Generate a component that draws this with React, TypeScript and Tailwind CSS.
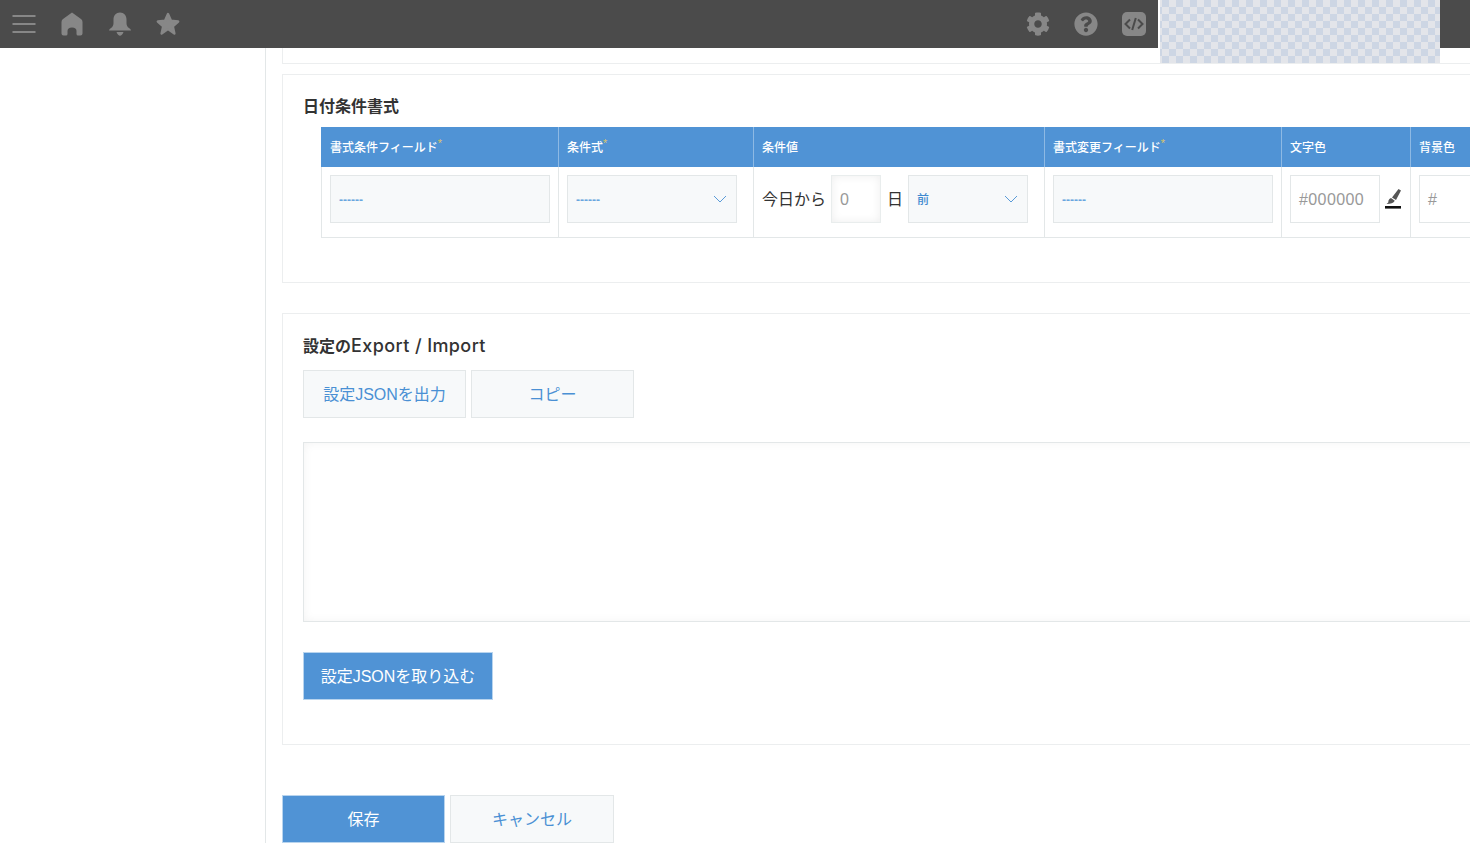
import React from "react";
import { FaCog, FaQuestionCircle } from "react-icons/fa";

const font = { fontFamily: '"Liberation Sans", "Noto Sans CJK JP", sans-serif' };

function Chevron() {
  return (
    <svg width="14" height="8" viewBox="0 0 14 8" className="shrink-0">
      <path d="M1 1l6 6 6-6" fill="none" stroke="#5a9bd8" strokeWidth="1" />
    </svg>
  );
}

function Th({ children, req, w }: { children: React.ReactNode; req?: boolean; w: string }) {
  return (
    <th className={`${w} h-10 border-r border-[#8db9e4] px-2 pt-[2px] text-left align-middle text-[12px] font-medium text-white first:border-l first:border-l-[#5093d5] last:border-r-0`}>
      <span className="relative">
        {children}
        {req && <span className="absolute -top-[3px] left-full text-[11px] leading-none text-[#d9c36a]">*</span>}
      </span>
    </th>
  );
}

function Field({ w, label, arrow }: { w: string; label: string; arrow?: boolean }) {
  return (
    <div className={`${w} flex h-12 items-center justify-between border border-[#e3e7e8] bg-[#f7f9fa] pl-2 pr-[9px] text-[12px] text-[#3f8ad0]`}>
      <span className="mt-[2px] font-medium">{label}</span>
      {arrow && <Chevron />}
    </div>
  );
}

function Dashes({ w, arrow }: { w: string; arrow?: boolean }) {
  return (
    <div className={`${w} flex h-12 items-center justify-between border border-[#e3e7e8] bg-[#f7f9fa] pl-2 pr-[9px] text-[12px] font-bold text-[#6aa6de]`}>
      <span className="mt-[2px]">------</span>
      {arrow && <Chevron />}
    </div>
  );
}

function Btn({ children, primary, w }: { children: React.ReactNode; primary?: boolean; w: string }) {
  return (
    <button
      className={`${w} flex h-12 items-center justify-center border pt-[2px] text-[16px] ${
        primary ? "border-[#b8d4ee] bg-[#5093d5] text-white" : "border-[#e3e7e8] bg-[#f7f9fa] text-[#4a90d4]"
      }`}
    >
      {children}
    </button>
  );
}

export default function App() {
  return (
    <div className="relative h-[843px] w-[1470px] overflow-hidden bg-white" style={font}>
      <header className="relative z-10 flex h-12 items-center bg-[#4b4b4b] pl-3 pr-[324px] text-[#878787]">
        <div className="flex gap-6">
          <svg width="24" height="24" viewBox="0 0 24 24"><path d="M0.5 4h23M0.5 12h23M0.5 20h23" stroke="currentColor" strokeWidth="2.2" fill="none" /></svg>
          <svg width="24" height="24" viewBox="0 0 24 24"><path fill="currentColor" d="M12 0.5L21 7Q22.5 8 22.5 10V21.5Q22.5 23.5 20.5 23.5H18Q16.5 23.5 16.5 22V19Q16.5 15.5 12 15.5Q7.5 15.5 7.5 19V22Q7.5 23.5 6 23.5H3.5Q1.5 23.5 1.5 21.5V10Q1.5 8 3 7Z" /></svg>
          <svg width="24" height="24" viewBox="0 0 24 24"><path fill="currentColor" d="M12 .5c-4 0-6.500 3-6.500 7v3.500c0 2.500-1 4-2.500 5q-2 1.200-2 2.500h22q0-1.300-2-2.500c-1.500-1-2.500-2.500-2.500-5V7.500c0-4-2.500-7-6.500-7zM8.500 20h7q-1.500 3.800-3.500 3.800T8.500 20z" /></svg>
          <svg width="24" height="24" viewBox="0 0 24 24"><path fill="currentColor" stroke="currentColor" strokeWidth="2.400" strokeLinejoin="round" d="M12 2l3 6.800 7.200.7-5.400 4.800 1.600 7.200L12 17l-6.400 4.500 1.600-7.200L1.800 9.500 9 8.800z" /></svg>
        </div>
        <div className="ml-auto flex gap-6">
          <FaCog size={24} />
          <FaQuestionCircle size={24} />
          <svg width="24" height="24" viewBox="0 0 24 24">
            <rect width="24" height="24" rx="5" fill="currentColor" />
            <path d="M8 7.500L3.500 12 8 16.500M16 7.500l4.500 4.500-4.500 4.500M13.800 6l-3.600 12" fill="none" stroke="#4b4b4b" strokeWidth="2" />
          </svg>
        </div>
      </header>
      <div className="absolute left-[1158px] top-0 z-20 h-[63px] w-[282px] border-l-2 border-white bg-[repeating-conic-gradient(#cdd6e4_0_25%,#e3e5ea_0_50%)] bg-[length:14px_14px] bg-[position:2px_7px]" />

      <div className="flex h-[795px]">
        <aside className="w-[266px] shrink-0 border-r border-[#e3e7e8] bg-white" />
        <main className="min-w-0 flex-1 overflow-hidden pl-4 text-[#333]">
          <div className="h-4 w-[1300px] border-b border-l border-[#eceeef]" />
          <section className="mt-[10px] h-[209px] w-[1300px] border border-[#eceeef] px-5 pt-5">
            <h2 className="text-[16px] font-bold leading-6">日付条件書式</h2>
            <table className="ml-[18px] mt-2 table-fixed border-collapse">
              <thead>
                <tr className="bg-[#5093d5]">
                  <Th w="w-[237px]" req>書式条件フィールド</Th>
                  <Th w="w-[195px]" req>条件式</Th>
                  <Th w="w-[291px]">条件値</Th>
                  <Th w="w-[237px]" req>書式変更フィールド</Th>
                  <Th w="w-[129px]">文字色</Th>
                  <Th w="w-[120px]">背景色</Th>
                </tr>
              </thead>
              <tbody>
                <tr className="h-[70px] border-b border-[#e3e7e8] align-top">
                  <td className="border-x border-[#e3e7e8] p-2"><Dashes w="w-[220px]" /></td>
                  <td className="border-r border-[#e3e7e8] p-2"><Dashes w="w-[170px]" arrow /></td>
                  <td className="border-r border-[#e3e7e8] p-2">
                    <div className="flex items-center text-[16px] text-[#333]">
                      <span className="mt-[2px]">今日から</span>
                      <span className="ml-[5px] flex h-12 w-[50px] items-center border border-[#e9eded] pl-2 pt-[2px] text-[#999] shadow-[inset_0_0_10px_rgba(0,0,0,0.07)]">0</span>
                      <span className="ml-[6px] mt-[2px]">日</span>
                      <span className="ml-[5px]"><Field w="w-[120px]" label="前" arrow /></span>
                    </div>
                  </td>
                  <td className="border-r border-[#e3e7e8] p-2"><Dashes w="w-[220px]" /></td>
                  <td className="border-r border-[#e3e7e8] p-2">
                    <div className="flex items-center">
                      <span className="flex h-12 w-[90px] items-center border border-[#e3e7e8] pl-2 pt-[2px] text-[16px] tracking-[0.4px] text-[#999]">#000000</span>
                      <svg width="16" height="20" viewBox="0 0 16 20" className="ml-[5px]">
                        <path fill="#555" d="M13.500 0L16 1.500 11 11 7 8.500zM6 9l3.800 2.700Q8 15 1.500 15 4 13.500 3.500 11.500 4 9.500 6 9z" />
                        <rect y="17" width="16" height="2.600" fill="#111" />
                      </svg>
                    </div>
                  </td>
                  <td className="p-2">
                    <span className="flex h-12 w-[90px] items-center border border-[#e3e7e8] pl-2 pt-[2px] text-[16px] text-[#999]">#</span>
                  </td>
                </tr>
              </tbody>
            </table>
          </section>
          <section className="mt-[30px] h-[432px] w-[1300px] border border-[#eceeef] px-5 pt-5">
            <h2 className="h-6 text-[16px] font-bold leading-6">
              設定の<span className="font-['Inter'] text-[18px] font-medium tracking-[0.4px]">Export / Import</span>
            </h2>
            <div className="mt-3 flex gap-[5px]">
              <Btn w="w-[163px]">設定JSONを出力</Btn>
              <Btn w="w-[163px]">コピー</Btn>
            </div>
            <div className="mt-6 h-[180px] w-[1270px] border border-[#e3e7e8] shadow-[inset_0_0_10px_rgba(0,0,0,0.05)]" />
            <div className="mt-[30px]"><Btn w="w-[190px]" primary>設定JSONを取り込む</Btn></div>
          </section>
          <div className="mt-[50px] flex gap-[5px]">
            <Btn w="w-[163px]" primary>保存</Btn>
            <Btn w="w-[164px]">キャンセル</Btn>
          </div>
        </main>
      </div>
    </div>
  );
}
